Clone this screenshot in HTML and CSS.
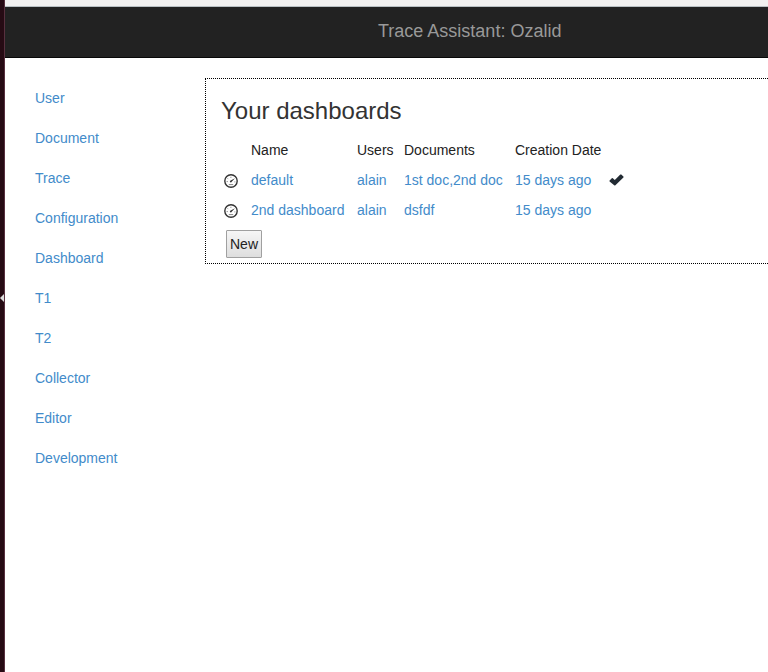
FILE: index.html
```
<!DOCTYPE html>
<html lang="en">
<head>
<meta charset="utf-8">
<title>Trace Assistant: Ozalid</title>
<link rel="stylesheet" href="styles.css">
</head>
<body>
<svg class="symbols" aria-hidden="true">
  <symbol id="gauge" viewBox="0 0 14 14">
    <circle cx="7" cy="7" r="6.2" fill="none" stroke="#333" stroke-width="1.4"/>
    <path d="M2.6 7.6h1.2M3.6 4.4l.7.7M6.9 2.8v1M10.4 7.9h1M4.8 10.6h4.4" fill="none" stroke="#777" stroke-width=".9"/>
    <path d="M11 4.2 7.7 7.7a.9.9 0 1 1-1-1.2z" fill="#333"/>
  </symbol>
</svg>
<div class="launcher"><span class="arrow"></span></div>
<div class="window">
  <div class="toolbar"></div>
  <header class="navbar"><span class="brand">Trace Assistant: Ozalid</span></header>
  <div class="content">
    <nav class="sidebar">
      <a href="#">User</a>
      <a href="#">Document</a>
      <a href="#">Trace</a>
      <a href="#">Configuration</a>
      <a href="#">Dashboard</a>
      <a href="#">T1</a>
      <a href="#">T2</a>
      <a href="#">Collector</a>
      <a href="#">Editor</a>
      <a href="#">Development</a>
    </nav>
    <main class="panel">
      <h1>Your dashboards</h1>
      <table>
        <colgroup>
          <col class="col-icon"><col class="col-name"><col class="col-users"><col class="col-documents"><col class="col-date"><col>
        </colgroup>
        <thead>
          <tr><td class="icon"></td><th scope="col">Name</th><th scope="col">Users</th><th scope="col">Documents</th><th scope="col">Creation Date</th><td></td></tr>
        </thead>
        <tbody>
          <tr>
            <td class="icon"><svg width="14" height="14"><use href="#gauge"/></svg></td>
            <td><a href="#">default</a></td>
            <td><a href="#">alain</a></td>
            <td><a href="#">1st doc,2nd doc</a></td>
            <td><a href="#">15 days ago</a></td>
            <td class="check"><svg width="15" height="14" viewBox="0 0 15 14"><path d="M0.6 7.4 2.8 5.2q.5-.4 1 0L5.8 7.1 11.3 1.6q.5-.4 1 0l2.1 2q.5.5 0 1L6.4 12.2q-.6.5-1.2 0L.6 8.4q-.4-.5 0-1z" fill="#222b33"/></svg></td>
          </tr>
          <tr>
            <td class="icon"><svg width="14" height="14"><use href="#gauge"/></svg></td>
            <td><a href="#">2nd dashboard</a></td>
            <td><a href="#">alain</a></td>
            <td><a href="#">dsfdf</a></td>
            <td><a href="#">15 days ago</a></td>
            <td></td>
          </tr>
        </tbody>
      </table>
      <div class="actions"><button type="button">New</button></div>
    </main>
  </div>
</div>
</body>
</html>
```
FILE: styles.css
```
* { box-sizing: border-box; }

body {
  margin: 0;
  min-height: 100vh;
  display: flex;
  background: #fff;
  color: #333;
  font: 14px/20px "Liberation Sans", Arial, sans-serif;
}

a { color: #428bca; text-decoration: none; }
a:hover { text-decoration: underline; }

.symbols { position: absolute; width: 0; height: 0; }

.launcher {
  position: relative;
  flex: 0 0 5px;
  background: #260b14;
  border-right: 1px solid #58303f;
}

.arrow {
  position: absolute;
  top: 294px;
  right: 0;
  border: solid transparent;
  border-width: 4px 4px 4px 0;
  border-right-color: #ddd;
}

.window { flex: 1; min-width: 0; }

.toolbar {
  height: 7px;
  background: #f2f1f0;
  border-bottom: 1px solid #b9c0c3;
}

.navbar {
  padding: 15px 0 17px 373px;
  background: #222;
  border-bottom: 1px solid #080808;
}

.brand { display: block; color: #999; font-size: 18px; line-height: 18px; }

.content {
  display: flex;
  align-items: flex-start;
  padding: 20px 0 0 15px;
}

.sidebar { flex: 0 0 185px; }
.sidebar a { display: block; padding: 10px 15px; }

.panel {
  flex: 1;
  min-width: 0;
  padding: 0 15px;
  border: 1px dotted #000;
  border-right: 0;
}

h1 { margin: 20px 0 12px; font-size: 24px; line-height: 24px; font-weight: 400; }

table { border-collapse: collapse; white-space: nowrap; }
.col-icon { width: 25px; }
.col-name { width: 106px; }
.col-users { width: 47px; }
.col-documents { width: 111px; }
.col-date { width: 98px; }

td, th { padding: 5px; font-weight: 400; text-align: left; color: #222; }
td svg { display: block; }
.icon { padding: 2px 8px 0 3px; }
.check { padding: 0 0 0 1px; }

.actions { padding: 5px; }

button {
  display: block;
  height: 28px;
  padding: 0 3px;
  border: 1px solid #a0a0a0;
  border-radius: 1px;
  background: linear-gradient(#f6f6f6, #dedede);
  color: #222;
  font: inherit;
}
```
